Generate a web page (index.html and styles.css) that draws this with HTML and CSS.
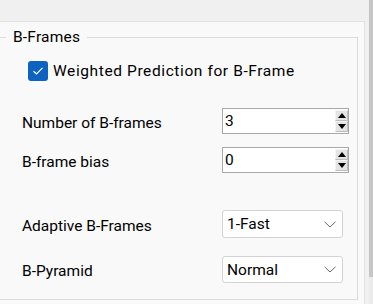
FILE: index.html
```html
<!DOCTYPE html>
<html lang="en">
<head>
    <meta charset="utf-8">
    <title>B-Frames</title>
    <link rel="stylesheet" href="styles.css">
</head>
<body>
    <div class="window">
        <div class="main">
            <div class="panel">
                <fieldset class="group">
                    <legend>B-Frames</legend>

                    <label class="check-row">
                        <span class="check">
                            <svg width="12" height="10" viewBox="0 0 12 10"><polyline points="1.5,5.2 4.5,8 10.5,1.8" fill="none" stroke="#fff" stroke-width="1.2"/></svg>
                        </span>
                        <span class="check-text">Weighted Prediction for B-Frame</span>
                    </label>

                    <div class="field-row row-spin1">
                        <span class="field-label">Number of B-frames</span>
                        <div class="spinbox">
                            <span class="spin-value">3</span>
                            <div class="spin-buttons">
                                <span class="spin-btn"><span class="tri-up"></span></span>
                                <span class="spin-btn"><span class="tri-down"></span></span>
                            </div>
                        </div>
                    </div>

                    <div class="field-row row-spin2">
                        <span class="field-label">B-frame bias</span>
                        <div class="spinbox">
                            <span class="spin-value">0</span>
                            <div class="spin-buttons">
                                <span class="spin-btn"><span class="tri-up"></span></span>
                                <span class="spin-btn"><span class="tri-down"></span></span>
                            </div>
                        </div>
                    </div>

                    <div class="field-row row-combo1">
                        <span class="field-label">Adaptive B-Frames</span>
                        <div class="combo">
                            <span class="combo-value">1-Fast</span>
                            <svg class="chevron" width="12" height="7" viewBox="0 0 12 7"><polyline points="0.5,0.8 6,6 11.5,0.8" fill="none" stroke="#6a6a6a" stroke-width="1"/></svg>
                        </div>
                    </div>

                    <div class="field-row row-combo2">
                        <span class="field-label">B-Pyramid</span>
                        <div class="combo combo-short">
                            <span class="combo-value">Normal</span>
                            <svg class="chevron" width="12" height="7" viewBox="0 0 12 7"><polyline points="0.5,0.8 6,6 11.5,0.8" fill="none" stroke="#6a6a6a" stroke-width="1"/></svg>
                        </div>
                    </div>
                </fieldset>
            </div>
        </div>
        <div class="scrollbar">
            <div class="scroll-thumb"></div>
            <div class="scroll-end"></div>
        </div>
    </div>
</body>
</html>
```

FILE: styles.css
```css
/* Base */
html, body {margin: 0; padding: 0}
body {
    background: #f0f0f0;
    font-family: Roboto, "Noto Sans", sans-serif;
    font-size: 15.5px;
    color: #000;
    width: 373px;
    height: 304px;
    overflow: hidden;
}

/* Window: page area + thin scrollbar */
.window {display: flex; height: 304px}
.main {width: 365px; padding-top: 21px; box-sizing: border-box; height: 100%}
.panel {
    background: #f9f9f9;
    border-top: 1px solid #e2e2e2;
    border-right: 1px solid #e2e2e2;
    height: 100%;
    box-sizing: border-box;
    padding-top: 5px;
}
.scrollbar {width: 4px; margin-left: 4px; display: flex; flex-direction: column}
.scroll-thumb {height: 276px; background: #c6c6c6}
.scroll-end {flex: 1; background: #ebebeb; border-top: 1px solid #c9c9c9}

/* Group box */
.group {
    margin: 0 6px 0 -2px;
    padding: 0 0 16px 0;
    border: 1px solid #dcdcdc;
    min-width: 0;
}
.group legend {
    margin-left: 7px;
    padding: 0 7px;
    line-height: 20px;
    height: 20px;
    letter-spacing: 0.2px;
}

/* Checkbox */
.check-row {
    display: flex;
    align-items: center;
    height: 20px;
    margin-top: 14px;
    padding-left: 29px;
    gap: 5px;
}
.check {
    width: 20px;
    height: 20px;
    border-radius: 3px;
    background: #0f63c0;
    display: flex;
    align-items: center;
    justify-content: center;
}
.check-text {letter-spacing: 0.6px}

/* Label + control rows */
.field-row {display: flex; align-items: center; padding-left: 23px}
.field-label {width: 200px; padding-top: 3px}
.row-spin1 {margin-top: 27px}
.row-spin2 {margin-top: 13px}
.row-combo1 {margin-top: 37px}
.row-combo2 {margin-top: 18px}

/* Spin boxes */
.spinbox {
    width: 127px;
    height: 26px;
    box-sizing: border-box;
    border: 1px solid #a8a8a8;
    background: #fff;
    display: flex;
    align-items: center;
    justify-content: space-between;
}
.spin-value {padding-left: 2px}
.spin-buttons {display: flex; flex-direction: column; align-self: stretch; padding: 1px 0}
.spin-btn {
    width: 13px;
    height: 11px;
    box-sizing: border-box;
    background: #e4e4e4;
    border: 1px solid #bdbdbd;
    border-top-color: #f4f4f4;
    border-left-color: #f4f4f4;
    display: flex;
    align-items: center;
    justify-content: center;
}
.tri-up {border-left: 4px solid transparent; border-right: 4px solid transparent; border-bottom: 5px solid #000}
.tri-down {border-left: 4px solid transparent; border-right: 4px solid transparent; border-top: 5px solid #000}

/* Combo boxes */
.combo {
    width: 121px;
    height: 28px;
    box-sizing: border-box;
    border: 1px solid #d3d3d3;
    border-radius: 3px;
    background: #fff;
    display: flex;
    align-items: center;
    justify-content: space-between;
    padding: 0 6px 0 4px;
}
.combo-short {height: 27px}
.chevron {display: block}
```
